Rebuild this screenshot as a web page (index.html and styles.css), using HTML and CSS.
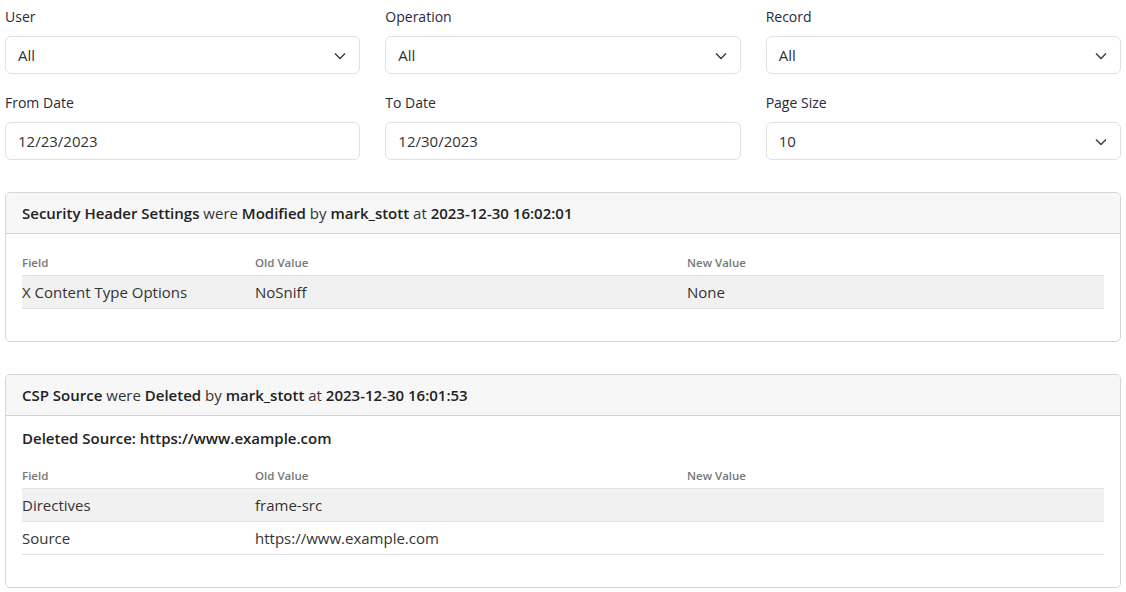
FILE: index.html
```html
<!DOCTYPE html>
<html>
<head>
<meta charset="utf-8">
<link rel="stylesheet" href="styles.css">
</head>
<body>
<div class="page">
  <div class="filters">
    <div class="field">
      <label class="label">User</label>
      <div class="control select"><span>All</span><svg class="chev" viewBox="0 0 12 8"><path d="M1 1.5l5 5 5-5"/></svg></div>
    </div>
    <div class="field">
      <label class="label">Operation</label>
      <div class="control select"><span>All</span><svg class="chev" viewBox="0 0 12 8"><path d="M1 1.5l5 5 5-5"/></svg></div>
    </div>
    <div class="field">
      <label class="label">Record</label>
      <div class="control select"><span>All</span><svg class="chev" viewBox="0 0 12 8"><path d="M1 1.5l5 5 5-5"/></svg></div>
    </div>
    <div class="field">
      <label class="label">From Date</label>
      <div class="control"><span>12/23/2023</span></div>
    </div>
    <div class="field">
      <label class="label">To Date</label>
      <div class="control"><span>12/30/2023</span></div>
    </div>
    <div class="field">
      <label class="label">Page Size</label>
      <div class="control select"><span>10</span><svg class="chev" viewBox="0 0 12 8"><path d="M1 1.5l5 5 5-5"/></svg></div>
    </div>
  </div>

  <div class="card">
    <div class="card-header"><b>Security Header Settings</b> were <b>Modified</b> by <b>mark_stott</b> at <b>2023-12-30 16:02:01</b></div>
    <div class="card-body">
      <table class="changes">
        <colgroup><col class="c1"><col class="c2"><col class="c3"></colgroup>
        <thead><tr><th>Field</th><th>Old Value</th><th>New Value</th></tr></thead>
        <tbody>
          <tr class="odd"><td>X Content Type Options</td><td>NoSniff</td><td>None</td></tr>
        </tbody>
      </table>
    </div>
  </div>

  <div class="card">
    <div class="card-header"><b>CSP Source</b> were <b>Deleted</b> by <b>mark_stott</b> at <b>2023-12-30 16:01:53</b></div>
    <div class="card-body">
      <div class="subtitle">Deleted Source: https://www.example.com</div>
      <table class="changes">
        <colgroup><col class="c1"><col class="c2"><col class="c3"></colgroup>
        <thead><tr><th>Field</th><th>Old Value</th><th>New Value</th></tr></thead>
        <tbody>
          <tr class="odd"><td>Directives</td><td>frame-src</td><td></td></tr>
          <tr><td>Source</td><td>https://www.example.com</td><td></td></tr>
        </tbody>
      </table>
    </div>
  </div>
</div>
</body>
</html>
```

FILE: styles.css
```css
* { box-sizing: border-box; }
html, body { margin: 0; padding: 0; background: #fff; }
body {
  font-family: "Open Sans", "Noto Sans", sans-serif;
  font-size: 15px;
  color: #212529;
}
.page {
  padding: 0 5px 0 5px;
}
.filters {
  display: grid;
  grid-template-columns: repeat(3, 1fr);
  column-gap: 25px;
  row-gap: 19px;
  padding-top: 7px;
}
.field { display: flex; flex-direction: column; }
.label {
  font-size: 14px;
  line-height: 20px;
  color: #27293d;
  margin-bottom: 9px;
}
.control {
  height: 38px;
  border: 1px solid #dee2e6;
  border-radius: 6px;
  display: flex;
  align-items: center;
  justify-content: space-between;
  padding: 0 13px 0 12px;
  font-size: 15px;
  color: #333;
}
.chev {
  width: 12px;
  height: 8px;
  fill: none;
  stroke: #343a40;
  stroke-width: 1.4;
  margin-top: 1px;
}
.card {
  border: 1px solid #d5d5d5;
  border-radius: 5px;
  margin-top: 32px;
  overflow: hidden;
}
.card + .card { margin-top: 32px; }
.card-header {
  background: #f7f7f7;
  border-bottom: 1px solid #d3d3d3;
  height: 41px;
  display: flex;
  align-items: center;
  padding: 0 16px;
  white-space: pre;
  color: #333;
}
.card-header b { font-weight: 600; color: #222; }
.card-body {
  padding: 15px 16px 32px 16px;
}
.subtitle {
  font-weight: 600;
  color: #222;
  line-height: 20px;
  margin-top: -3px;
  margin-bottom: 14px;
}
.changes {
  width: 100%;
  border-collapse: collapse;
}
.c1 { width: 233px; }
.c2 { width: 432px; }
.changes th {
  text-align: left;
  font-size: 11.5px;
  font-weight: 600;
  color: #777;
  padding: 7px 0 5px 0;
  border-bottom: 1px solid #dee2e6;
  line-height: 14px;
}
.changes td {
  height: 33px;
  padding: 0;
  border-bottom: 1px solid #dee2e6;
  color: #333;
}
.changes tr.odd td { background: #f1f1f1; }
```
